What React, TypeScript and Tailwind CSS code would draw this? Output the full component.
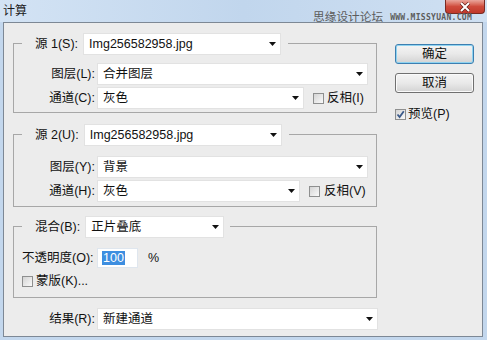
import React from "react"

const font = "font-['Liberation_Sans','Noto_Sans_CJK_SC',sans-serif]"

function Arrow() {
  return (
    <svg width="7" height="4" viewBox="0 0 7 4" className="shrink-0">
      <polygon points="0,0 7,0 3.5,4" fill="#111" />
    </svg>
  )
}

function Select({ w, text }: { w: string; text: string }) {
  return (
    <div className={`${w} h-[22px] shrink-0 bg-white border border-[#e2e2e2] flex items-center justify-between pl-[5px] pr-[4px]`}>
      <span className="leading-[16px]">{text}</span>
      <Arrow />
    </div>
  )
}

function Check({ checked = false }: { checked?: boolean }) {
  return (
    <span className="relative w-[11px] h-[11px] shrink-0 border border-[#8e8f8f] bg-gradient-to-br from-[#d4d4d4] to-[#fafafa]">
      {checked && (
        <svg width="9" height="9" viewBox="0 0 9 9" className="absolute left-0 top-0">
          <path d="M1.5 4.5 L3.6 7 L7.8 1.2" stroke="#3b5a8a" strokeWidth="1.8" fill="none" />
        </svg>
      )}
    </span>
  )
}

function Btn({ label, def = false }: { label: string; def?: boolean }) {
  return (
    <div
      className={`w-[79px] h-[20px] rounded-[3px] border flex items-center justify-center leading-[16px] bg-gradient-to-b from-[#f4f4f4] via-[#e9e9e9] to-[#d3d3d3] ${
        def ? "border-[#3c7fb1] shadow-[inset_0_0_0_1px_#8fd3f0]" : "border-[#707070] shadow-[inset_0_0_0_1px_#fafafa]"
      }`}
    >
      {label}
    </div>
  )
}

function Legend({ label, children, pr = "pr-[7px]" }: { label: string; children: React.ReactNode; pr?: string }) {
  return (
    <div className={`-mt-[11px] ml-[8px] w-fit bg-[#ececec] flex items-center gap-[5px] pl-[13px] ${pr}`}>
      <span className="leading-[16px]">{label}</span>
      {children}
    </div>
  )
}

function Row({ label, children, className = "" }: { label: string; children: React.ReactNode; className?: string }) {
  return (
    <div className={`flex items-center ${className}`}>
      <span className="w-[81px] text-right leading-[16px] mr-[2px]">{label}</span>
      {children}
    </div>
  )
}

export default function App() {
  return (
    <div className={`${font} text-[12.5px] text-[#111] w-[487px] h-[340px] bg-[#c3d7ed] relative overflow-hidden`}>
      {/* title bar */}
      <div className="h-[22px] flex items-start bg-gradient-to-r from-[#d3e3f4] via-[#c1d6ed] to-[#cfe0f2]">
        <span className="pl-[3px] pt-[3px] text-[12px] leading-[16px] text-[#1b1b1b]">计算</span>
        <div className="ml-auto mr-[2px] w-[40px] h-[14px] rounded-b-[4px] border border-t-0 border-[#7a2a22] bg-gradient-to-b from-[#e9a59c] via-[#cf4b3c] to-[#c0392b] flex items-center justify-center">
          <svg width="12" height="10" viewBox="0 0 12 10">
            <path d="M2 1 L10 9 M10 1 L2 9" stroke="#5a1a14" strokeWidth="3.2" />
            <path d="M2 1 L10 9 M10 1 L2 9" stroke="#fff" strokeWidth="2" />
          </svg>
        </div>
      </div>
      {/* watermark */}
      <div className="absolute left-[313px] top-[9px] flex items-end gap-[7px] text-[#5c5c5c]">
        <span className="text-[11.7px] leading-[13px] font-['Noto_Sans_CJK_SC',sans-serif]">思缘设计论坛</span>
        <span className="text-[8px] leading-[9px] tracking-[0.3px] font-['DejaVu_Sans_Mono',monospace] font-bold">WWW.MISSYUAN.COM</span>
      </div>

      {/* dialog body */}
      <div className="ml-[3px] w-[480px] h-[315px] border border-[#7d8895] bg-[#ececec]">
        <div className="flex pl-[9px]">
          <div className="w-[366px] flex flex-col">
            {/* source 1 */}
            <div className="mt-[20px] w-[364px] border border-[#a7a7a7] flex flex-col pb-[3px]">
              <Legend label="源 1(S):">
                <Select w="w-[198px]" text="Img256582958.jpg" />
              </Legend>
              <Row label="图层(L):" className="mt-[8px]">
                <Select w="w-[271px]" text="合并图层" />
              </Row>
              <Row label="通道(C):" className="mt-[2px]">
                <Select w="w-[207px]" text="灰色" />
                <span className="ml-[9px] flex items-center gap-[3px]">
                  <Check />
                  <span className="leading-[16px]">反相(I)</span>
                </span>
              </Row>
            </div>

            {/* source 2 */}
            <div className="mt-[21px] w-[364px] border border-[#a7a7a7] flex flex-col pb-[4px]">
              <Legend label="源 2(U):">
                <Select w="w-[198px]" text="Img256582958.jpg" />
              </Legend>
              <Row label="图层(Y):" className="mt-[10px]">
                <Select w="w-[271px]" text="背景" />
              </Row>
              <Row label="通道(H):" className="mt-[2px]">
                <Select w="w-[203px]" text="灰色" />
                <span className="ml-[9px] flex items-center gap-[4px]">
                  <Check />
                  <span className="leading-[16px]">反相(V)</span>
                </span>
              </Row>
            </div>

            {/* blending */}
            <div className="mt-[19px] w-[364px] border border-[#a7a7a7] flex flex-col pb-[9px]">
              <Legend label="混合(B):" pr="pr-[6px]">
                <Select w="w-[139px]" text="正片叠底" />
              </Legend>
              <div className="mt-[10px] pl-[8px] flex items-center h-[20px]">
                <span className="leading-[16px] w-[75px]">不透明度(O):</span>
                <div className="ml-[0px] w-[41px] h-[20px] bg-white border border-[#dfe6ee] flex items-center pl-[4px]">
                  <span className="bg-[#3d8ee0] text-white leading-[14px] px-[1px]">100</span>
                </div>
                <span className="ml-[10px] leading-[16px]">%</span>
              </div>
              <div className="mt-[6px] pl-[8px] flex items-center gap-[3px] h-[14px]">
                <Check />
                <span className="leading-[16px]">蒙版(K)...</span>
              </div>
            </div>

            {/* result */}
            <div className="mt-[10px] flex items-center">
              <span className="w-[82px] text-right leading-[16px] mr-[2px]">结果(R):</span>
              <Select w="w-[281px]" text="新建通道" />
            </div>
          </div>

          <div className="ml-[16px] pt-[21px] flex flex-col">
            <Btn label="确定" def />
            <div className="mt-[9px]">
              <Btn label="取消" />
            </div>
            <div className="mt-[13px] flex items-center gap-[2px]">
              <Check checked />
              <span className="leading-[16px]">预览(P)</span>
            </div>
          </div>
        </div>
      </div>
    </div>
  )
}
